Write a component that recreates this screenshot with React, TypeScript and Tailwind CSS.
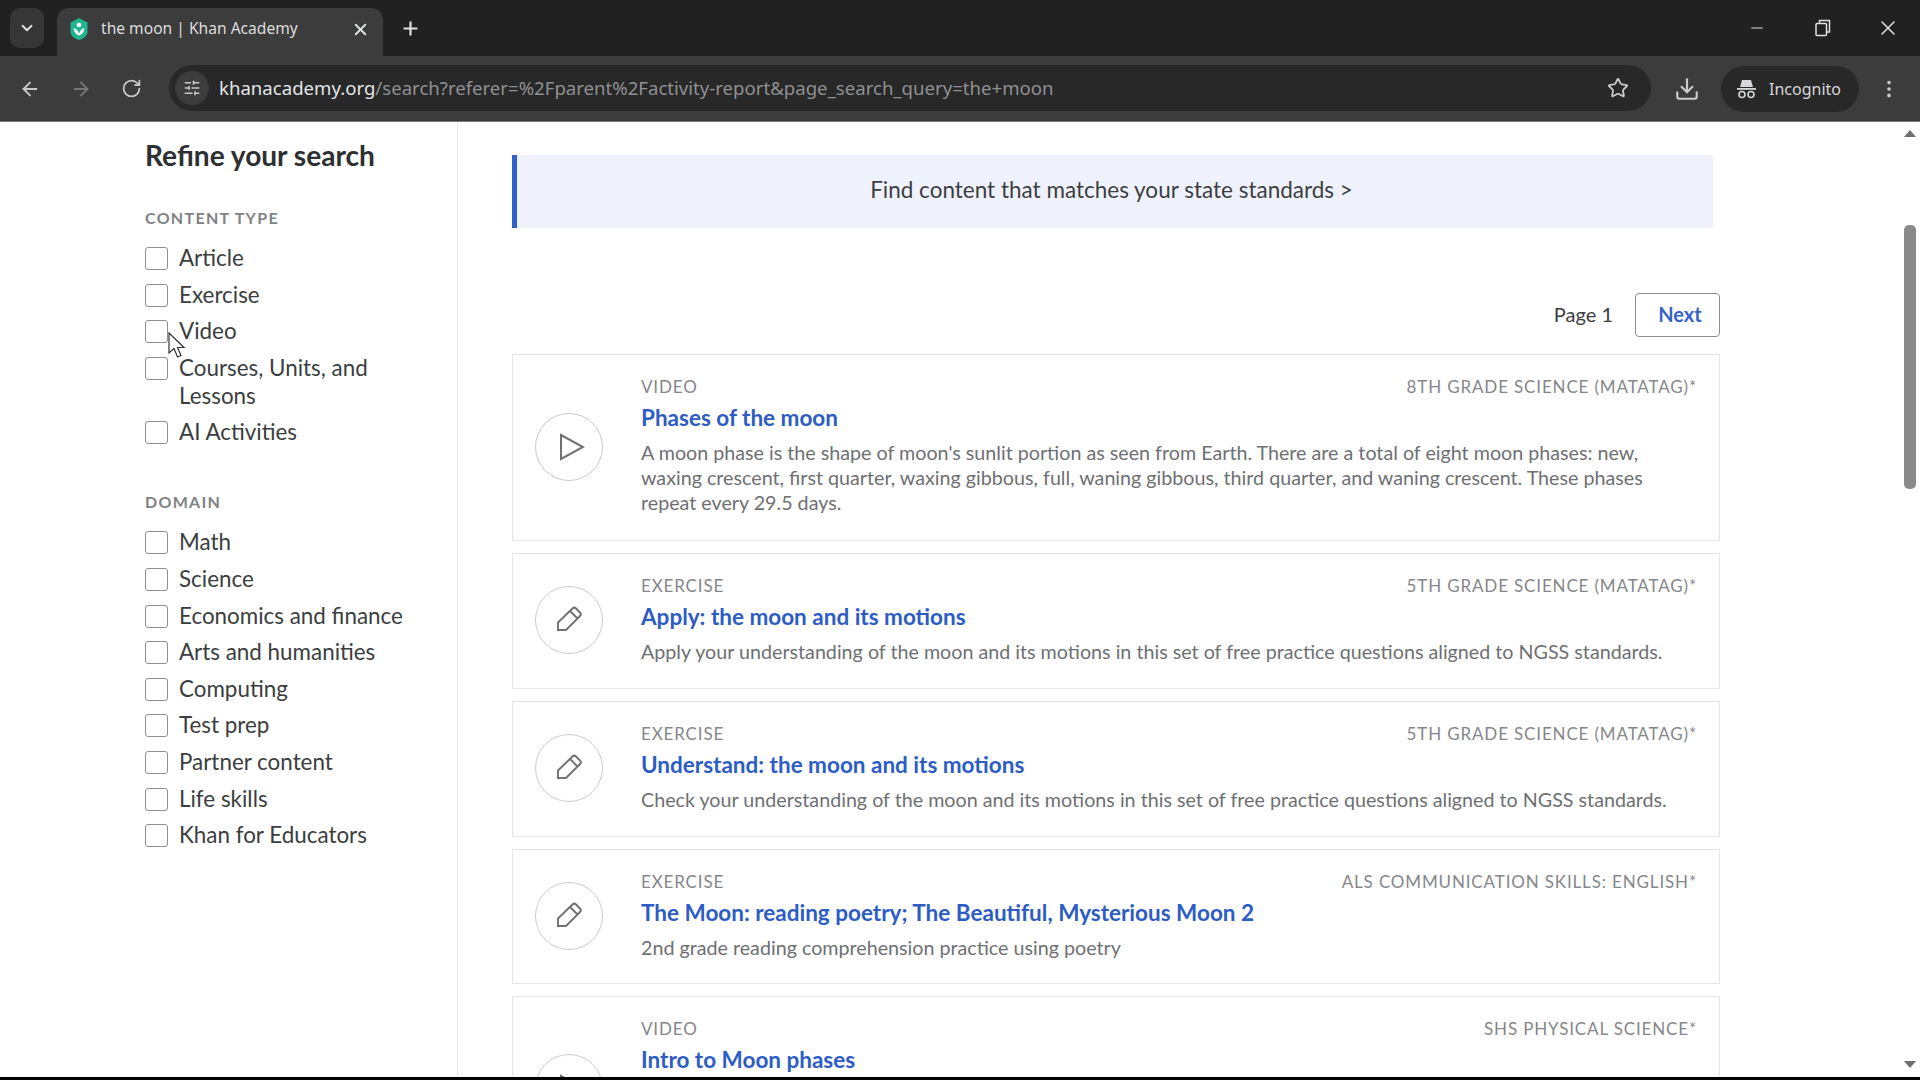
import { ArrowLeft, ArrowRight, Download, EllipsisVertical, Minus, Plus, RotateCw, Star, X, ChevronDown, SlidersHorizontal } from "lucide-react";

type Result = {
  kind: string;
  course: string;
  title: string;
  body: string[];
  height: string;
};

const contentTypes = ["Article", "Exercise", "Video", "Courses, Units, and Lessons", "AI Activities"];
const domains = [
  "Math",
  "Science",
  "Economics and finance",
  "Arts and humanities",
  "Computing",
  "Test prep",
  "Partner content",
  "Life skills",
  "Khan for Educators",
];

const results: Result[] = [
  {
    kind: "VIDEO",
    course: "8TH GRADE SCIENCE (MATATAG)*",
    title: "Phases of the moon",
    body: [
      "A moon phase is the shape of moon's sunlit portion as seen from Earth. There are a total of eight moon phases: new,",
      "waxing crescent, first quarter, waxing gibbous, full, waning gibbous, third quarter, and waning crescent. These phases",
      "repeat every 29.5 days.",
    ],
    height: "h-[187px]",
  },
  {
    kind: "EXERCISE",
    course: "5TH GRADE SCIENCE (MATATAG)*",
    title: "Apply: the moon and its motions",
    body: ["Apply your understanding of the moon and its motions in this set of free practice questions aligned to NGSS standards."],
    height: "h-[136px]",
  },
  {
    kind: "EXERCISE",
    course: "5TH GRADE SCIENCE (MATATAG)*",
    title: "Understand: the moon and its motions",
    body: ["Check your understanding of the moon and its motions in this set of free practice questions aligned to NGSS standards."],
    height: "h-[136px]",
  },
  {
    kind: "EXERCISE",
    course: "ALS COMMUNICATION SKILLS: ENGLISH*",
    title: "The Moon: reading poetry; The Beautiful, Mysterious Moon 2",
    body: ["2nd grade reading comprehension practice using poetry"],
    height: "h-[135px]",
  },
  {
    kind: "VIDEO",
    course: "SHS PHYSICAL SCIENCE*",
    title: "Intro to Moon phases",
    body: [],
    height: "h-[136px]",
  },
];

const FilterRow = ({ label }: { label: string }) => (
  <label className="flex items-start gap-[11px] mb-[8.6px] text-[22.4px] leading-[28px] text-[#3b3e40]">
    <span className="mt-[3px] w-[23px] h-[23px] shrink-0 rounded-[3px] border border-[#8d8f94] bg-white" />
    <span>{label}</span>
  </label>
);

const FilterGroup = ({ title, items, className }: { title: string; items: string[]; className: string }) => (
  <div className={className}>
    <div className="text-[16px] leading-[20px] font-bold tracking-[1.3px] text-[#808285] mb-[16px]">{title}</div>
    {items.map((item) => (
      <FilterRow key={item} label={item} />
    ))}
  </div>
);

const ResultCard = ({ result }: { result: Result }) => (
  <div className={`${result.height} shrink-0 flex border border-[#e4e5e7] bg-white`}>
    <div className={`w-[128px] shrink-0 flex pl-[22px] ${result.body.length ? "items-center pb-[2px]" : "items-start pt-[57px]"}`}>
      <div className="w-[68px] h-[68px] rounded-full border border-[#c9cacc] flex items-center justify-center text-[#6f7175]">
        {result.kind === "VIDEO" ? (
          <svg width="26" height="28" viewBox="0 0 26 28" fill="none" stroke="currentColor" strokeWidth="2" className="ml-[6px]">
            <path d="M2 2 L24 14 L2 26 Z" />
          </svg>
        ) : (
          <svg width="28" height="28" viewBox="0 0 28 28" fill="none" stroke="currentColor" strokeWidth="1.9" className="mb-[2px]">
            <path d="M3 25 V17.5 L17.5 3.5 C18.5 2.5 20 2.5 21 3.5 L25 7.5 C26 8.5 26 10 25 11 L11 25 Z" />
            <path d="M15 6 L22.5 13.5" />
          </svg>
        )}
      </div>
    </div>
    <div className="flex-1 pt-[20px] pr-[22px]">
      <div className="flex justify-between text-[17px] leading-[24px] tracking-[0.85px] text-[#85878a]">
        <span>{result.kind}</span>
        <span>{result.course}</span>
      </div>
      <div className="mt-[4px] text-[22.5px] leading-[30px] font-bold text-[#2d5cc5]">{result.title}</div>
      <div className="mt-[6.5px] text-[19.7px] leading-[25.1px] text-[#6e7073]">
        {result.body.map((line) => (
          <div key={line} className="whitespace-nowrap">
            {line}
          </div>
        ))}
      </div>
    </div>
  </div>
);

export default function App() {
  return (
    <div className="w-[1920px] h-[1080px] overflow-hidden flex flex-col font-['Lato','Open_Sans',sans-serif] bg-white">
      {/* tab strip */}
      <div className="h-[56px] shrink-0 bg-[#212121] flex items-end text-[#dfe0e2] font-['Noto_Sans','Open_Sans',sans-serif]">
        <div className="w-[34px] h-[40px] ml-[10px] mb-[8px] rounded-[10px] bg-[#363636] flex items-center justify-center">
          <ChevronDown size={18} strokeWidth={2.5} />
        </div>
        <div className="w-[326px] h-[48px] ml-[13px] rounded-t-[12px] bg-[#3c3c3c] flex items-center pl-[12px] pr-[13px] pb-[6px]">
          <svg width="20" height="24" viewBox="0 0 20 24">
            <path d="M10 1 L18.5 5.5 V15 C18.5 19 14 22 10 23 C6 22 1.5 19 1.5 15 V5.5 Z" fill="#1fb58f" />
            <circle cx="10" cy="8" r="2.3" fill="#fff" />
            <path d="M4.5 11 C7 11.5 9 13.5 10 16.5 C11 13.5 13 11.5 15.5 11 C15 15 13 17.5 10 18.5 C7 17.5 5 15 4.5 11 Z" fill="#fff" />
          </svg>
          <span className="ml-[12px] text-[15.6px] text-[#dcdddf] flex-1">the moon | Khan Academy</span>
          <X size={19} strokeWidth={2.5} />
        </div>
        <Plus size={21} strokeWidth={2.5} className="ml-[17px] mb-[17px]" />
        <div className="flex-1" />
        <div className="flex items-center mb-[16px] mr-[20px]">
          <Minus size={18} strokeWidth={1.5} />
          <svg width="16" height="18" viewBox="0 0 16 18" fill="none" stroke="currentColor" strokeWidth="1.5" className="ml-[49px]">
            <rect x="1" y="4.5" width="10.5" height="12" rx="1" />
            <path d="M4.5 4.5 V1.5 H14.5 V13 H11.5" />
          </svg>
          <X size={24} strokeWidth={1.5} className="ml-[45px]" />
        </div>
      </div>
      {/* toolbar */}
      <div className="h-[66px] shrink-0 bg-[#3c3c3c] border-b border-[#77787a] flex items-center text-[#c9cacc]">
        <ArrowLeft size={22} className="ml-[19px]" />
        <ArrowRight size={22} className="ml-[29px] text-[#77787a]" />
        <RotateCw size={21} className="ml-[29px]" />
        <div className="ml-[27px] w-[1482px] h-[46px] rounded-full bg-[#282828] flex items-center pl-[6px] pr-[22px] mb-[1px]">
          <div className="w-[34px] h-[34px] rounded-full bg-[#3c3c3c] flex items-center justify-center">
            <SlidersHorizontal size={18} />
          </div>
          <span className="ml-[10px] flex-1 text-[18.6px] text-[#8f9093] font-['Noto_Sans','Open_Sans',sans-serif]">
            <span className="text-[#e3e4e6]">khanacademy.org</span>/search?referer=%2Fparent%2Factivity-report&page_search_query=the+moon
          </span>
          <Star size={22} strokeWidth={2} />
        </div>
        <Download size={26} className="ml-[23px]" />
        <div className="ml-[21px] w-[138px] h-[46px] rounded-full bg-[#282828] flex items-center pl-[15px] text-[16px] text-[#d6d7d9] font-['Noto_Sans','Open_Sans',sans-serif]">
          <svg width="21" height="20" viewBox="0 0 21 20" fill="currentColor">
            <path d="M6 1 H15 L17 8 H4 Z" />
            <rect x="1" y="9" width="19" height="1.8" />
            <circle cx="6" cy="15.5" r="3" fill="none" stroke="currentColor" strokeWidth="1.6" />
            <circle cx="15" cy="15.5" r="3" fill="none" stroke="currentColor" strokeWidth="1.6" />
          </svg>
          <span className="ml-[12px]">Incognito</span>
        </div>
        <EllipsisVertical size={22} className="ml-[19px]" />
      </div>
      {/* page */}
      <div className="flex-1 min-h-0 flex overflow-hidden relative">
        <aside className="w-[458px] shrink-0 border-r border-[#e6e7e8] pl-[145px] pr-[40px] pt-[14px] text-[#2f3133]">
          <h2 className="text-[28.1px] leading-[38px] font-bold text-[#2d2f31]">Refine your search</h2>
          <FilterGroup title="CONTENT TYPE" items={contentTypes} className="mt-[34px]" />
          <FilterGroup title="DOMAIN" items={domains} className="mt-[46px]" />
        </aside>
        <main className="flex-1 min-w-0 pl-[54px] flex flex-col">
          <div className="w-[1201px] h-[73px] mt-[33px] shrink-0 border-l-[5px] border-[#2f5fc9] bg-[#eff2fd] flex items-center justify-center pb-[3px] pr-[7px] text-[22.5px] text-[#3c3e40]">
            Find content that matches your state standards &gt;
          </div>
          <div className="w-[1208px] mt-[65px] shrink-0 flex justify-end items-center">
            <span className="text-[20px] text-[#3b3d3f] pb-[3px]">Page 1</span>
            <div className="ml-[22px] w-[85px] h-[44px] rounded-[4px] border border-[#8b8d90] flex items-center justify-center pl-[5px] pb-[3px] text-[20px] font-bold text-[#3562cb]">
              Next
            </div>
          </div>
          <div className="w-[1208px] mt-[17px] flex flex-col gap-[12px]">
            {results.map((result) => (
              <ResultCard key={result.title} result={result} />
            ))}
          </div>
        </main>
        <div className="w-[20px] shrink-0 flex flex-col items-center">
          <div className="mt-[8px] w-0 h-0 border-x-[6px] border-x-transparent border-b-[7px] border-b-[#6e6f71]" />
          <div className="mt-[88px] w-[12px] h-[264px] rounded-[5px] bg-[#8a8a8b]" />
          <div className="flex-1" />
          <div className="mb-[9px] w-0 h-0 border-x-[6px] border-x-transparent border-t-[7px] border-t-[#6e6f71]" />
        </div>
        {/* mouse cursor */}
        <svg className="absolute left-[168px] top-[210px]" width="18" height="28" viewBox="0 0 18 28">
          <path d="M1 1 V21 L6 16.5 L9.5 25 L13 23.5 L9.5 15.5 H16 Z" fill="#fff" stroke="#333" strokeWidth="1.2" />
        </svg>
      </div>
      <div className="h-[3px] shrink-0 bg-black" />
    </div>
  );
}
